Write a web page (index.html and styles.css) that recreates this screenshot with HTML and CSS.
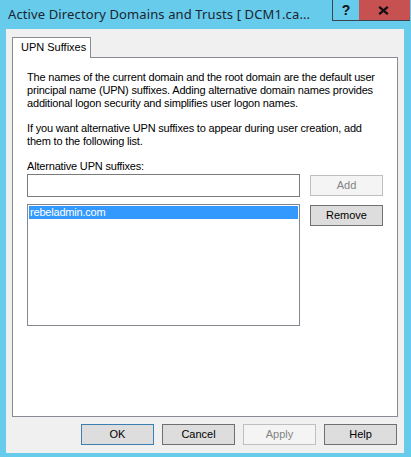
FILE: index.html
```html
<!DOCTYPE html>
<html>
<head>
<meta charset="utf-8">
<link rel="stylesheet" href="styles.css">
</head>
<body>
<div class="window">
  <div class="titlebar">
    <div class="title">Active Directory Domains and Trusts [ DCM1.ca...</div>
    <div class="caption-btns">
      <div class="cbtn help">?</div>
      <div class="cbtn close">
        <svg width="11" height="9" viewBox="0 0 11 9"><path d="M1.2 0.8 L9.8 8.2 M9.8 0.8 L1.2 8.2" stroke="#111" stroke-width="2.2" fill="none"/></svg>
      </div>
    </div>
  </div>
  <div class="client">
    <div class="tabs"><div class="tab">UPN Suffixes</div></div>
    <div class="panel">
      <p class="text p1">The names of the current domain and the root domain are the default user<br>principal name (UPN) suffixes. Adding alternative domain names provides<br>additional logon security and simplifies user logon names.</p>
      <p class="text p2">If you want alternative UPN suffixes to appear during user creation, add<br>them to the following list.</p>
      <div class="text label">Alternative UPN suffixes:</div>
      <div class="row input-row">
        <div class="input"></div>
        <div class="btn disabled">Add</div>
      </div>
      <div class="row list-row">
        <div class="list"><div class="item selected">rebeladmin.com</div></div>
        <div class="btn side">Remove</div>
      </div>
    </div>
    <div class="footer">
      <div class="btn default">OK</div>
      <div class="btn">Cancel</div>
      <div class="btn disabled">Apply</div>
      <div class="btn">Help</div>
    </div>
  </div>
</div>
</body>
</html>
```

FILE: styles.css
```css
* { box-sizing: border-box; }
html, body { margin: 0; padding: 0; }
body {
  width: 411px;
  height: 457px;
  overflow: hidden;
  background: #67cbec;
  font-family: "Liberation Sans", Arial, sans-serif;
  font-size: 11px;
  color: #000;
}
.window {
  width: 411px;
  height: 457px;
  display: flex;
  flex-direction: column;
  background: #67cbec;
}
.titlebar {
  height: 29px;
  display: flex;
  align-items: flex-start;
  justify-content: space-between;
}
.title {
  font-family: "Noto Sans", "Liberation Sans", sans-serif;
  font-size: 13px;
  line-height: 16px;
  letter-spacing: 0.12px;
  padding: 6px 0 0 8px;
  color: #1b2630;
  white-space: nowrap;
}
.caption-btns {
  display: flex;
  margin-right: 1px;
}
.cbtn {
  height: 21px;
  display: flex;
  align-items: center;
  justify-content: center;
  border-bottom: 1px solid #3a4650;
}
.help {
  width: 27px;
  border-left: 1px solid #3a4650;
  font-weight: bold;
  font-size: 14px;
  color: #111;
  padding-bottom: 1px;
}
.close {
  width: 51px;
  background: #c75050;
  padding-right: 3px;
}
.client {
  flex: 1;
  margin: 0 7px 4px 6px;
  background: #f0f0f0;
  padding: 8px 6px 8px 6px;
  display: flex;
  flex-direction: column;
}
.tabs {
  height: 20px;
  display: flex;
}
.tab {
  position: relative;
  z-index: 1;
  width: 79px;
  height: 21px;
  margin-bottom: -1px;
  background: #fff;
  border: 1px solid #898c95;
  border-bottom: none;
  padding: 3px 0 0 8px;
  line-height: 13px;
  white-space: nowrap;
}
.panel {
  flex: 1;
  background: #fff;
  border: 1px solid #898c95;
  padding: 13px 14px 0 14px;
  display: flex;
  flex-direction: column;
}
.text {
  margin: 0;
  line-height: 13px;
  white-space: nowrap;
  letter-spacing: -0.18px;
}
.p2 { margin-top: 12px; }
.label { margin-top: 12px; }
.row {
  display: flex;
  gap: 10px;
}
.input-row {
  margin-top: 1px;
  align-items: center;
}
.input {
  width: 273px;
  height: 23px;
  border: 1px solid #7a7a7a;
  background: #fff;
}
.list-row {
  margin-top: 7px;
  align-items: flex-start;
}
.list {
  width: 273px;
  height: 122px;
  border: 1px solid #828790;
  background: #fff;
  padding: 1px;
}
.item {
  height: 13px;
  line-height: 13px;
  padding-left: 1px;
  letter-spacing: -0.2px;
}
.item.selected {
  background: #3399ff;
  color: #fff;
}
.btn {
  width: 73px;
  height: 21px;
  border: 1px solid #707070;
  background: #dddddd;
  display: flex;
  align-items: center;
  justify-content: center;
  line-height: 13px;
  color: #000;
}
.btn.side { margin-top: 1px; }
.btn.default { border-color: #3c7fb1; }
.btn.disabled {
  border-color: #bfbfbf;
  background: #f4f4f4;
  color: #838383;
}
.footer {
  margin-top: 7px;
  display: flex;
  justify-content: flex-end;
  gap: 8px;
  padding-right: 1px;
}
```
